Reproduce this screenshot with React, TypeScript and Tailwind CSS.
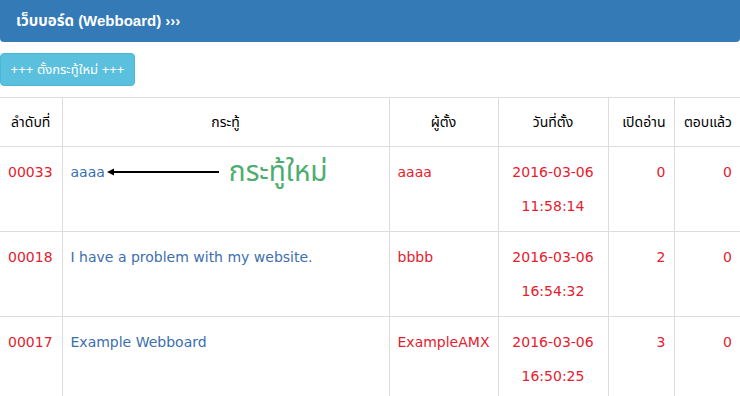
import React from "react";

const rows = [
  { id: "00033", topic: "aaaa", author: "aaaa", date: "2016-03-06", time: "11:58:14", views: "0", replies: "0", isNew: true },
  { id: "00018", topic: "I have a problem with my website.", author: "bbbb", date: "2016-03-06", time: "16:54:32", views: "2", replies: "0" },
  { id: "00017", topic: "Example Webboard", author: "ExampleAMX", date: "2016-03-06", time: "16:50:25", views: "3", replies: "0" },
];

export default function App() {
  return (
    <div
      className="w-[740px] h-[396px] overflow-hidden bg-white text-[14px] text-[#333]"
      style={{ fontFamily: '"DejaVu Sans", "Noto Sans Thai", "Noto Sans", sans-serif' }}
    >
      <div className="h-[42px] bg-[#337ab7] rounded-b-[4px] flex items-center px-4">
        <span
          className="text-white font-bold text-[15px]"
          style={{ fontFamily: '"Liberation Sans", "Noto Sans Thai", "Noto Sans", sans-serif' }}
        >
          เว็บบอร์ด (Webboard) ›››
        </span>
      </div>
      <div className="pt-[11px] pb-[11px]">
        <button
          className="h-[33px] w-[135px] rounded-[4px] bg-[#5bc0de] border border-[#46b8da] text-white text-[13px] whitespace-nowrap flex items-center justify-center"
          style={{ fontFamily: '"Liberation Sans", "Noto Sans Thai", "Noto Sans", sans-serif' }}
        >
          +++ ตั้งกระทู้ใหม่ +++
        </button>
      </div>
      <table className="w-[740px] table-fixed border-collapse">
        <colgroup>
          <col className="w-[62px]" />
          <col className="w-[327px]" />
          <col className="w-[109px]" />
          <col className="w-[110px]" />
          <col className="w-[66px]" />
          <col className="w-[66px]" />
        </colgroup>
        <thead>
          <tr className="h-[49px] border-t border-b border-[#ddd]">
            <th className="font-normal text-black text-center px-1">ลำดับที่</th>
            <th className="font-normal text-black text-center border-l border-[#ddd]">กระทู้</th>
            <th className="font-normal text-black text-center border-l border-[#ddd]">ผู้ตั้ง</th>
            <th className="font-normal text-black text-center border-l border-[#ddd]">วันที่ตั้ง</th>
            <th className="font-normal text-black text-right pr-2 border-l border-[#ddd]">เปิดอ่าน</th>
            <th className="font-normal text-black text-right pr-2 border-l border-[#ddd]">ตอบแล้ว</th>
          </tr>
        </thead>
        <tbody>
          {rows.map((r) => (
            <tr key={r.id} className="border-b border-[#ddd] align-top">
              <td className="pl-2 pt-2 pb-2 leading-[34px] text-[#e5202e]">{r.id}</td>
              <td className="pl-2 pt-2 pb-2 leading-[34px] text-[#3b6fae] border-l border-[#ddd]">
                <div className="flex items-center h-[34px]">
                  <span>{r.topic}</span>
                  {r.isNew && (
                    <>
                      <svg width="114" height="10" viewBox="0 0 114 10" className="ml-[2px]">
                        <line x1="6" y1="5" x2="112" y2="5" stroke="#000" strokeWidth="2" />
                        <polygon points="0,5 7,1.5 7,8.5" fill="#000" />
                      </svg>
                      <span className="ml-[8px] text-[28px] leading-none text-[#4cae6e]">กระทู้ใหม่</span>
                    </>
                  )}
                </div>
              </td>
              <td className="pl-2 pt-2 pb-2 leading-[34px] text-[#e5202e] border-l border-[#ddd] whitespace-nowrap">{r.author}</td>
              <td className="pt-2 pb-2 leading-[34px] text-[#e5202e] text-center border-l border-[#ddd]">
                {r.date}
                <br />
                {r.time}
              </td>
              <td className="pr-2 pt-2 pb-2 leading-[34px] text-[#e5202e] text-right border-l border-[#ddd]">{r.views}</td>
              <td className="pr-2 pt-2 pb-2 leading-[34px] text-[#e5202e] text-right border-l border-[#ddd]">{r.replies}</td>
            </tr>
          ))}
        </tbody>
      </table>
    </div>
  );
}
